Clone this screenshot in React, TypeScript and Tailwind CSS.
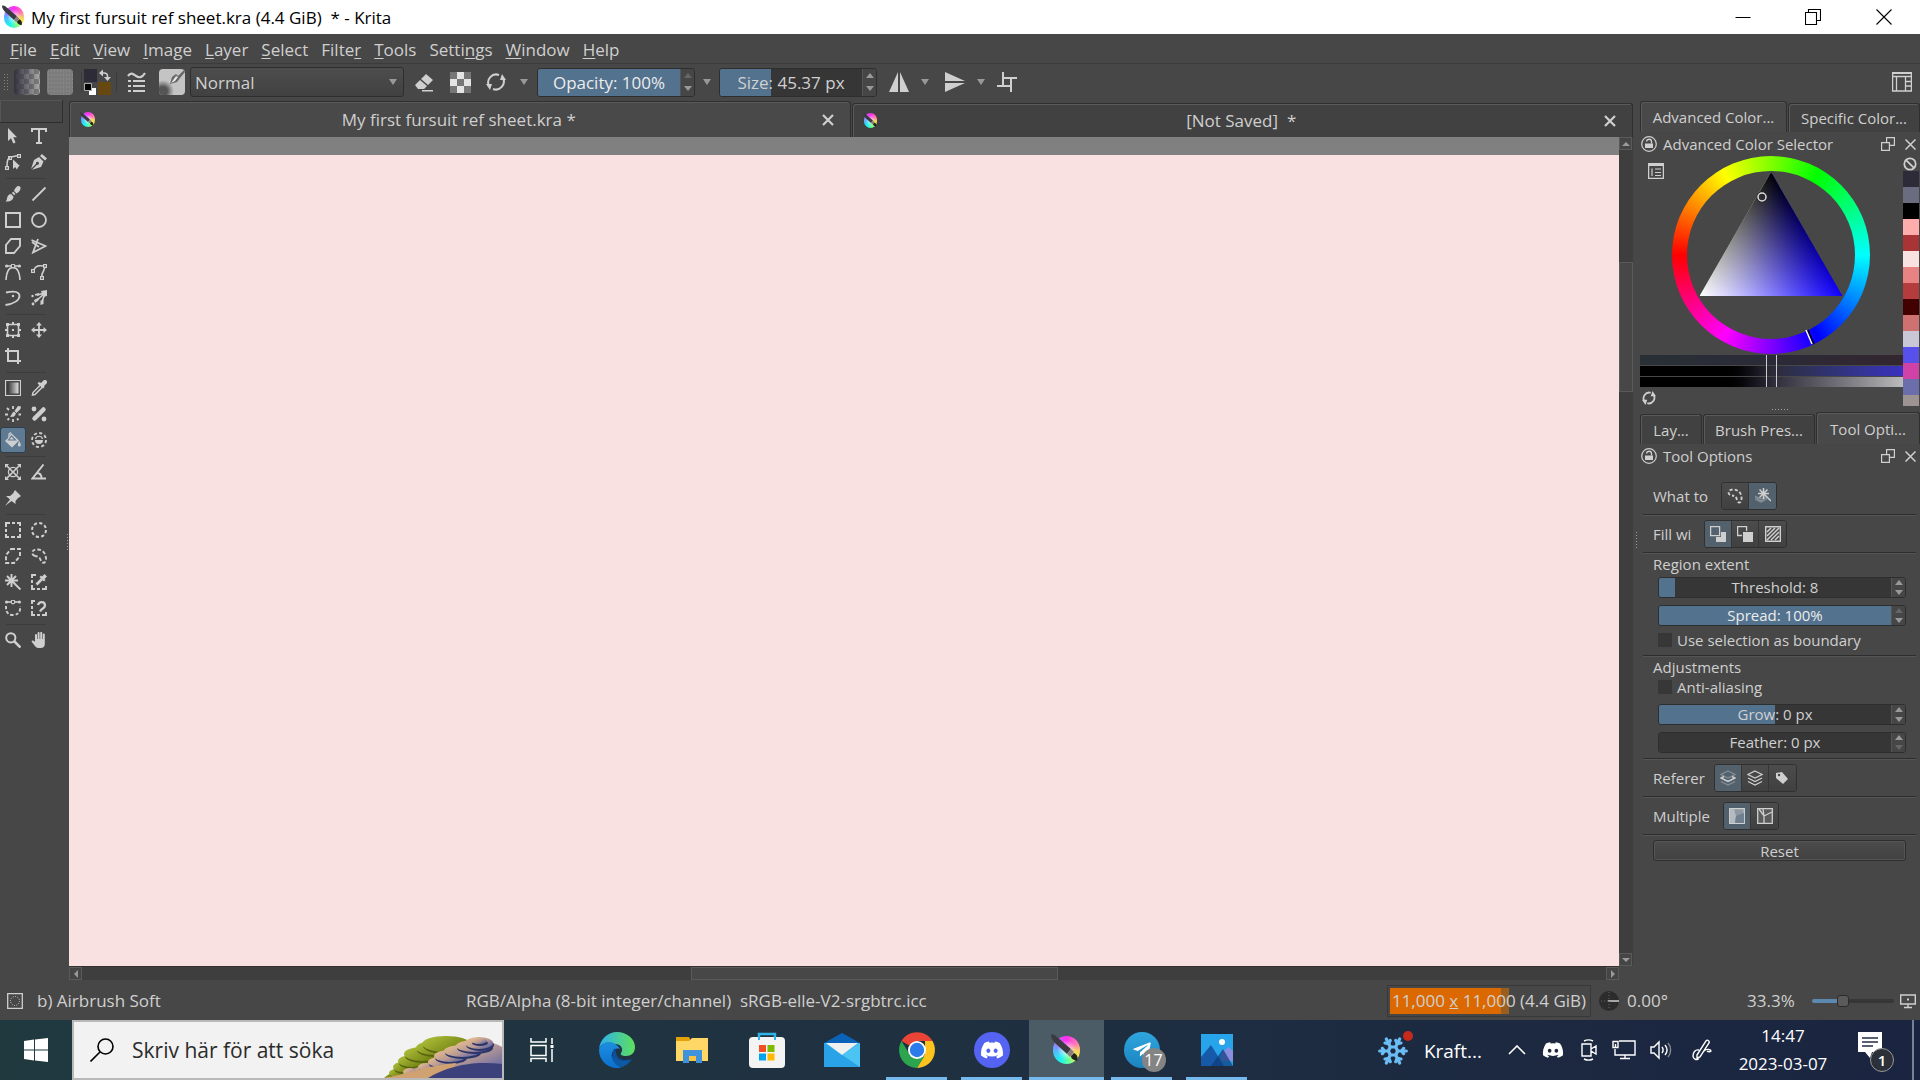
import type { ReactNode } from "react";
import { Snowflake } from "lucide-react";
import { FaDiscord, FaTelegramPlane } from "react-icons/fa";
import { clsx } from "clsx";

type IconProps = { children: ReactNode; className?: string; box?: string };

function Icon({ children, className = "size-4", box = "0 0 16 16" }: IconProps) {
  return (
    <svg viewBox={box} className={clsx("shrink-0", className)} fill="none" stroke="currentColor" strokeWidth="1.6">
      {children}
    </svg>
  );
}

const solid = { fill: "currentColor", stroke: "none" };

const toolGroups: { name: string; icon: ReactNode }[][] = [
  [
    { name: "Select shapes", icon: <path {...solid} d="M3 0v13l3-2.800 2.300 5.300 2.300-1-2.300-5.200H12z" /> },
    { name: "Text", icon: <path d="M1 4V1h14v3M8 1v14M5 15h6" strokeWidth="2" /> },
    { name: "Edit shapes", icon: <><path d="M2 12C2 7 3 4 5 3.500M6 3l6-1.300" /><path strokeWidth="1.200" d="M.6 12.600h2.800v2.800H.6zM3.600 2.600h2.800v2.800H3.600zM12.600.6h2.800v2.800h-2.800z" /><path {...solid} d="M8 5.500V15l2.200-2 1.600 2.500L14 12h1z" /></> },
    { name: "Calligraphy", icon: <><path {...solid} d="M0 15l3-9 5-3 4.500 4.500L10 13l-9 2.800 5-5a1.500 1.500 0 10-1-1zM9 2l2-2 5 4.500-2 2z" /></> },
  ],
  [
    { name: "Freehand brush", icon: <path {...solid} d="M12 .5c2-1 4 0 3.500 2.500-.5 2-2.500 4-4 4.500L9 5c.5-1.500 1.500-3.500 3-4.500zM8.300 5.800l2.200 2.200-1.300 1.300-2.400-2.300zM6 8l2.500 2.500C8.500 14 5 16 .5 15.500 2.500 14 1.500 12 2.800 10 3.600 8.800 4.800 8 6 8z" /> },
    { name: "Line", icon: <path d="M1.500 14.500L14.500 1.500" strokeWidth="1.800" /> },
    { name: "Rectangle", icon: <path d="M1 1h14v14H1z" strokeWidth="2" /> },
    { name: "Ellipse", icon: <circle cx="8" cy="8" r="7" strokeWidth="1.800" /> },
    { name: "Polygon", icon: <path d="M6 1h9v7l-6 7H1V7z" strokeWidth="1.900" /> },
    { name: "Polyline", icon: <path d="M7 1L2 14.500 14.500 8 .5 2M1 4l7 5" strokeWidth="1.800" /> },
    { name: "Bezier curve", icon: <><path d="M1 16C1.500 7 4 3.500 8 3.500S14.500 7 15 16M1 2h14" /><circle cx="1.600" cy="2" r="1.600" {...solid} /><circle cx="14.400" cy="2" r="1.600" {...solid} /><circle cx="8" cy="2" r="1.800" fill="#474747" strokeWidth="1.200" /></> },
    { name: "Freehand path", icon: <><path d="M3 5.500C5 1 9 1.500 13 2M11 13V10C13 7 13 5 14 3" /><path strokeWidth="1.200" d="M.6 5.600h2.800v2.800H.6zM12.600.6h2.800v2.800h-2.800zM9.600 12.600h2.800v2.800H9.600z" /></> },
    { name: "Dynamic brush", icon: <><path d="M1 2.500c9-2 13.500-.5 13.500 3.500S9 14 .5 15" strokeWidth="1.800" /><circle cx="8" cy="6" r="1.200" {...solid} /></> },
    { name: "Multibrush", icon: <><path d="M14 3L6 5M14 3L5 11M14 3l-3 9" strokeWidth="1.600" /><path {...solid} d="M10 1l6-1v6l-4 1zM4 4l4-1v2.500H4zM3 10l4-2 1 2-4 3zM9.500 10.500l3-.5v4l-3 1z" /><circle cx="1.500" cy="6" r="1.200" {...solid} /><circle cx="2" cy="14" r="1.400" {...solid} /></> },
  ],
  [
    { name: "Transform", icon: <><path d="M2.500 2.500h11v11h-11z" /><path {...solid} d="M1 1h3v3H1zM12 1h3v3h-3zM1 12h3v3H1zM12 12h3v3h-3zM7 0h2v2H7zM7 14h2v2H7zM0 7h2v2H0zM14 7h2v2h-2zM7 7h2v2H7z" /></> },
    { name: "Move", icon: <><path d="M8 2v12M2 8h12" strokeWidth="1.800" /><path {...solid} d="M8 0l3 3.500H5zM8 16l-3-3.500h6zM0 8l3.500-3v6zM16 8l-3.500 3V5z" /></> },
    { name: "Crop", icon: <path d="M0 3h13v13M3 0v13h13" strokeWidth="2" /> },
  ],
  [
    { name: "Gradient", icon: <><defs><linearGradient id="tg"><stop stopColor="#333" /><stop offset="1" stopColor="#ddd" /></linearGradient></defs><path d="M.5.500h15v15H.5z" strokeWidth="1.200" fill="none" /><path fill="url(#tg)" stroke="none" d="M2.500 2.500h11v11h-11z" /></> },
    { name: "Color sampler", icon: <><path d="M9.500 5L2 12.500 1.500 15l2.500-.5L11.500 7" strokeWidth="1.500" /><path {...solid} d="M10 3l3-3c2-.5 3.500 1 3 3l-3 3 .5 1-1.500 1.500L6.500 3.500 8 2z" /></> },
    { name: "Colorize mask", icon: <><path {...solid} d="M13 0l3 .5-.5 2.500-4 4-2-2zM9 5.500l2 2-1 2c-2 2-3.500 1.500-5 1C7 9 6.500 7 9 5.500z" /><path d="M8 0v3M2 2l2 2M0 8.500h3M2.500 14l1.700-1.700M8 13v3M13.500 14L12 12.500M13.500 8.500H16" strokeWidth="1.800" /></> },
    { name: "Smart patch", icon: <><path d="M3.500 12.500l9-9" strokeWidth="4.500" strokeLinecap="round" /><circle cx="3" cy="3" r="2.400" {...solid} /><circle cx="13" cy="13" r="2.400" {...solid} /></> },
    { name: "Fill", icon: <><path {...solid} d="M6 1l8 7.500-7 7L0 9l4.500-4.500zM14 9c1 1.500 1.800 2.500 1.800 4a1.500 1.500 0 01-3 0z" /><path d="M4 6V2l2-1.500" strokeWidth="1.300" /><path stroke="#5f7a93" strokeWidth="1.200" d="M3.500 8L6.500 4l4 4z" /></> },
    { name: "Enclose and fill", icon: <><circle cx="8" cy="8" r="7" strokeWidth="1.900" strokeDasharray="3.100 2.400" /><path {...solid} d="M4 8h8a4 4 0 01-8 0z" /><path d="M4.500 7a3.600 3.600 0 017 0" strokeWidth="1.200" /></> },
  ],
  [
    { name: "Assistants", icon: <><path d="M1 1l14 14M15 1L1 15" strokeWidth="1.600" /><circle cx="8" cy="8" r="4.600" strokeWidth="1.200" /><path {...solid} d="M0 0h4L0 4zM16 0v4l-4-4zM0 16v-4l4 4zM16 16h-4l4-4z" /></> },
    { name: "Measure", icon: <path d="M12.500.5L1.500 14.500H15M6 9c3 0 4.500 2 4.500 5.500" strokeWidth="1.900" /> },
    { name: "Reference images", icon: <path {...solid} d="M10 0l6 6-2 1.500-1 .5-2.500 3v3L6.500 11 0 16l5-6.500-4-3.500h4l3-2.500z" /> },
  ],
  [
    { name: "Rectangular selection", icon: <path d="M1 5V1h4M7 1h3M12 1h3v3M15 6v4M15 12v3h-3M10 15H6M4 15H1v-3M1 10V7" strokeWidth="2" /> },
    { name: "Elliptical selection", icon: <circle cx="8" cy="8" r="7" strokeWidth="2" strokeDasharray="3.200 2.300" /> },
    { name: "Polygonal selection", icon: <path d="M6 1h9v7l-6 7H1V7z" strokeWidth="1.900" strokeDasharray="4 2" /> },
    { name: "Freehand selection", icon: <path d="M4 8C-1 6 1 1 7 1.500S15 7 15 11s-4 5-5 2-2-4.500-6-5" strokeWidth="1.900" strokeDasharray="3.600 2" /> },
    { name: "Contiguous selection", icon: <path d="M6.500 0v13M0 6.500h13M2 2l9 9M11 2l-9 9M9 9l6.500 6.500" strokeWidth="1.900" /> },
    { name: "Similar color selection", icon: <><path d="M5 1H1v3M1 6v3M1 11v4h3M6 15h3M11 15h4v-3" strokeWidth="1.900" /><path d="M11 5l-5.500 5.500" strokeWidth="2.600" /><path {...solid} d="M11 2.500L13.500 0 16 2.500 13.500 5l1 1L13 7.500 8.500 3 10 1.500z" /></> },
    { name: "Bezier selection", icon: <><path d="M1 2h14" /><path d="M1 6v4c1 3 3 5 7 5s6-2 7-5V6" strokeWidth="1.900" strokeDasharray="3.200 2" /><circle cx="1.600" cy="2" r="1.600" {...solid} /><circle cx="14.400" cy="2" r="1.600" {...solid} /><circle cx="8" cy="2" r="1.800" fill="#474747" strokeWidth="1.200" /></> },
    { name: "Magnetic selection", icon: <><path d="M4 1H1v3M1 6v3M1 11v4h3M6 15h3M11 15h4v-3" strokeWidth="1.900" /><path d="M7 5c1-4 7-4 7 .5 0 3-3 2-5 6" strokeWidth="2.300" /></> },
  ],
  [
    { name: "Zoom", icon: <><circle cx="5.800" cy="5.800" r="4.600" strokeWidth="2" /><path d="M9 9l6.500 6.500" strokeWidth="2.600" /></> },
    { name: "Pan", icon: <path {...solid} d="M4 9V3a1 1 0 012 0v4h.6V1a1 1 0 012 0v6h.6V.9a1 1 0 012 0V7h.6V2.500a1 1 0 012 0V12c0 2.500-1.500 4-4 4H7.500C5 16 4 14 .5 9.500 1 8 2.500 8 4 10z" /> },
  ],
];

const menus = [
  ["", "F", "ile"], ["", "E", "dit"], ["", "V", "iew"], ["", "I", "mage"], ["", "L", "ayer"], ["", "S", "elect"],
  ["Filte", "r", ""], ["", "T", "ools"], ["Setti", "n", "gs"], ["", "W", "indow"], ["", "H", "elp"],
];

const history = [
  "#2d2b38", "#6a6d80", "#000000", "#ffacac", "#a93436", "#fae1e1", "#e88383", "#b43c3c",
  "#430000", "#d07171", "#c9c7d5", "#5750eb", "#d042a5", "#6c6dab", "#9c9392",
];

function KritaLogo({ className }: { className: string }) {
  return (
    <span className={clsx("relative block shrink-0", className)}>
      <span className="absolute inset-x-[8%] inset-y-[5%] rounded-full bg-[radial-gradient(#fff9_15%,transparent_50%),conic-gradient(#ff2bf0,#ff7fb0_60deg,#f8c86c_90deg,#f5f53a_125deg,#7dff8a_160deg,#19f5f0_210deg,#5cb0ff_270deg,#b46bff_310deg,#ff2bf0)]" />
      <svg viewBox="0 0 32 32" className="absolute inset-0 size-full">
        <path fill="#3b3b3f" d="M0 1c2-1 4 0 6 2l14 12-4 5L4 9C2 7 0 4 0 1z" />
        <path fill="#8a7d80" d="M16 20l4-5 3 3-4 5z" />
        <path fill="#222" d="M20 22l3-3c4 2 4 5 3 8-3-1-6-2-6-5z" />
      </svg>
    </span>
  );
}

function Caret() {
  return <span className="block border-x-4 border-t-6 border-x-transparent border-t-[#999]" />;
}

type SpinProps = { label: string; value: string; fill: number; className: string; small?: boolean; up?: boolean; down?: boolean };

function SliderSpin({ label, value, fill, className, small, up = true, down = true }: SpinProps) {
  return (
    <div className={clsx("flex overflow-hidden rounded-[3px] border border-[#2e2e2e]", className)}>
      <input
        aria-label={label}
        defaultValue={value}
        className={clsx("min-w-0 flex-1 text-center outline-none", small ? "text-[15px] leading-[19px]" : "pt-px text-[17px]", fill > 60 ? "text-[#ececec]" : "text-[#d0d0d0]")}
        style={{ background: `linear-gradient(to right, #53728e ${fill}%, #363636 ${fill}%)` }}
      />
      <div className="flex w-3.5 flex-col items-center justify-around border-l border-[#555] bg-[#464646]">
        <button aria-label={`Increase ${label}`} className={clsx("border-x-4 border-b-5 border-x-transparent", up ? "border-b-[#999]" : "border-b-[#666]")} />
        <button aria-label={`Decrease ${label}`} className={clsx("border-x-4 border-t-5 border-x-transparent", down ? "border-t-[#999]" : "border-t-[#666]")} />
      </div>
    </div>
  );
}

function TitleBar() {
  return (
    <header className="flex h-[34px] shrink-0 items-center bg-white pl-0.5 text-[17px] text-black">
      <KritaLogo className="size-6" />
      <h1 className="flex-1 whitespace-pre pt-0.5 pl-[5px]">My first fursuit ref sheet.kra (4.4 GiB)  * - Krita</h1>
      <div className="flex">
        <button aria-label="Minimize" className="grid w-[70px] place-items-center"><Icon><path strokeWidth="1" d="M.5 8.500h15" /></Icon></button>
        <button aria-label="Restore" className="grid w-[70px] place-items-center"><Icon><path strokeWidth="1.100" d="M.5 3.500h11v12H.5zM3.500 3V.5h12v11H12" /></Icon></button>
        <button aria-label="Close" className="grid w-[72px] place-items-center"><Icon><path strokeWidth="1.100" d="M.5.500l15 15M15.500.5l-15 15" /></Icon></button>
      </div>
    </header>
  );
}

function MenuBar() {
  return (
    <nav className="flex h-[30px] shrink-0 items-center gap-[13px] border-b border-[#3b3b3b] pt-0.5 pl-2.5 text-[17px]">
      {menus.map(([a, b, c]) => (
        <button key={a + b + c}>{a}<span className="underline underline-offset-2">{b}</span>{c}</button>
      ))}
    </nav>
  );
}

function Grip({ vertical }: { vertical?: boolean }) {
  return (
    <span
      className={clsx(
        "shrink-0 bg-[radial-gradient(#a0a0a0_1px,transparent_1px)] bg-[size:3px_3px]",
        vertical ? "h-[18px] w-[3px]" : "h-[3px] w-[18px]"
      )}
    />
  );
}

function Toolbar() {
  return (
    <div className="flex h-9 shrink-0 items-center">
      <span className="ml-[3px] h-[18px] w-1.5 bg-[radial-gradient(#858585_1px,transparent_1px)] bg-[size:3px_3px]" />
      <button aria-label="Gradients" className="ml-[5px] size-[26px] rounded-sm bg-[linear-gradient(to_right,#34323f,#34323f00),conic-gradient(#aaa_25%,#808080_0_50%,#aaa_0_75%,#808080_0)] bg-[size:100%_100%,10px_10px]" />
      <button aria-label="Patterns" className="ml-[7px] size-[26px] rounded-sm bg-[radial-gradient(#888_1px,#7c7c7c_1px)] bg-[size:3px_4px]" />
      <span className="ml-2 h-5 w-px bg-[#3b3b3b]" />
      <button aria-label="Foreground and background color" className="ml-[2px]">
        <Icon className="h-[26px] w-7" box="0 0 28 26">
          <path fill="#2d2b38" stroke="none" d="M0 0h13v13H0z" />
          <path fill="#674810" stroke="none" d="M14 13h13v13H14z" />
          <path fill="#fff" stroke="none" d="M5 19h7v7H5z" />
          <path fill="#000" stroke="#aaa" strokeWidth="1" d="M.5 14.500h7v7h-7z" />
          <path d="M18 4h2c2.500 0 3.500 1 3.500 3v2" strokeWidth="1.600" /><path {...solid} d="M15 4l4-3.500v7zM20 8h7l-3.500 4z" />
        </Icon>
      </button>
      <span className="ml-1 h-5 w-px bg-[#3b3b3b]" />
      <button aria-label="Edit brush settings" className="ml-2.5"><Icon className="h-5 w-[19px]" box="0 0 19 20"><path strokeWidth="2.200" d="M1 4c3-4 5-2 8 0s6 2 9-3" /><path strokeWidth="2" d="M1 9h3M6 9h12M1 14h3M6 14h12M1 19h3M6 19h12" /></Icon></button>
      <button aria-label="Brush preset" className="ml-[13px] overflow-hidden rounded-sm">
        <svg viewBox="0 0 26 26" className="size-[26px]">
          <defs><radialGradient id="soft"><stop offset=".4" stopColor="#555" /><stop offset="1" stopColor="#666" stopOpacity="0" /></radialGradient></defs>
          <path fill="#c4c4c4" d="M0 0h26v26H0z" />
          <circle cx="4" cy="22" r="11" fill="url(#soft)" />
          <path fill="#666" d="M11 15l2-7 4-3 2 2 7-7v3l-5 6-3 4z" /><path fill="#e8e8e8" d="M12 14l5-7 2 1-3 4z" />
        </svg>
      </button>
      <div className="relative ml-[5px] h-[30px] w-[214px]">
        <select aria-label="Blending mode" className="size-full appearance-none rounded-[3px] border border-[#2e2e2e] bg-linear-to-b from-[#4d4d4d] to-[#414141] pt-px pl-1 text-[17px] leading-7">
          <option>Normal</option>
        </select>
        <span className="pointer-events-none absolute top-3 right-[7px] flex"><Caret /></span>
      </div>
      <button aria-label="Eraser mode" className="ml-2.5"><Icon className="size-5" box="0 0 20 20"><path {...solid} d="M12 2l7 6-5 5-7-6zM6 8l7 6-3 3H4l-3-4zM8 18h11v1.500H8z" /></Icon></button>
      <button aria-label="Preserve alpha" className="ml-4">
        <Icon className="size-[21px]" box="0 0 21 21"><path fill="#777" stroke="none" d="M0 0h21v21H0z" /><path fill="#e4e4e4" stroke="none" d="M7 0h7v7H7zM0 7h7v7H0zM14 7h7v7h-7zM7 14h7v7H7z" /></Icon>
      </button>
      <button aria-label="Reload preset" className="ml-[15px]"><Icon className="size-5" box="0 0 20 20"><path strokeWidth="2" d="M3 14A8 8 0 0113 3M17 6A8 8 0 017 17" /><path {...solid} d="M0 12h6l-2 6zM20 8h-6l2-6z" /></Icon></button>
      <button aria-label="Opacity options" className="ml-3.5"><Caret /></button>
      <SliderSpin label="Opacity" value="Opacity: 100%" fill={100} up={false} className="ml-[9px] h-[29px] w-[158px]" />
      <button aria-label="Size options" className="ml-2"><Caret /></button>
      <SliderSpin label="Size" value="Size: 45.37 px" fill={36} className="ml-2 h-[29px] w-[158px]" />
      <button aria-label="Mirror horizontally" className="ml-3"><Icon className="size-5" box="0 0 20 20"><path {...solid} d="M9 0v20H0zM11 0v20h9z" /></Icon></button>
      <button aria-label="Horizontal mirror options" className="ml-3"><Caret /></button>
      <button aria-label="Mirror vertically" className="ml-4"><Icon className="size-5" box="0 0 20 20"><path {...solid} d="M0 0l20 9H0zM0 20l20-9H0z" /></Icon></button>
      <button aria-label="Vertical mirror options" className="ml-3"><Caret /></button>
      <button aria-label="Wrap around mode" className="ml-3"><Icon className="size-5" box="0 0 20 20"><path strokeWidth="2" d="M0 14h14V20M6 0v14M6 6h14M14 6v8" /></Icon></button>
      <button aria-label="Choose workspace" className="mr-2 ml-auto"><Icon className="size-5" box="0 0 20 20"><path strokeWidth="1.300" d="M.6 1h18.800v18H.6zM.6 4.500h18.800M4.500 4.500V19M13.500 4.500V19M13.500 9.500h6M13.500 14h6" /><path d="M0 1h20" strokeWidth="2" /></Icon></button>
    </div>
  );
}

function Toolbox() {
  return (
    <aside className="relative w-[69px] shrink-0">
      <div className="h-[23px] w-[63px] border-r border-b border-[#2e2e2e] shadow-[inset_1px_1px_#555]" />
      {toolGroups.map((group, i) => (
        <div key={i} className="pb-1.5">
          <div className="grid w-[52px] grid-cols-2">
            {group.map(({ name, icon }) => (
              <button key={name} aria-label={name} className={clsx("grid h-[26px] place-items-center", name === "Fill" && "rounded-[3px] border border-[#2f3f4d] bg-[#5f7a93]")}>
                <Icon>{icon}</Icon>
              </button>
            ))}
          </div>
          {i < toolGroups.length - 1 && <hr className="-mb-px ml-1.5 w-10 translate-y-[3px] border-[#3c3c3c]" />}
        </div>
      ))}
      <span className="absolute top-[433px] right-0 flex"><Grip vertical /></span>
    </aside>
  );
}

const arrowBox = "grid size-[13px] shrink-0 place-items-center border border-[#5a5a5a] bg-[#454545]";

function DocTab({ title, active }: { title: string; active?: boolean }) {
  return (
    <div className={clsx("flex flex-1 items-center rounded-t-[3px] border border-b-0 border-[#2f2f2f] px-2.5 shadow-[inset_1px_1px_#5a5a5a]", active ? "bg-[#494949]" : "mt-0.5 bg-[#414141]")}>
      <KritaLogo className="size-4" />
      <button className="flex-1 whitespace-pre text-[17px]">{title}</button>
      <button aria-label={`Close ${title}`} className="mr-1.5"><Icon className="size-3" box="0 0 12 12"><path strokeWidth="2.200" d="M1 1l10 10M11 1L1 11" /></Icon></button>
    </div>
  );
}

function Documents() {
  return (
    <main className="flex min-w-0 flex-1 flex-col">
      <div className="flex h-[37px] shrink-0 gap-px pt-px">
        <DocTab title="My first fursuit ref sheet.kra *" active />
        <DocTab title="[Not Saved]  *" />
      </div>
      <div className="flex min-h-0 flex-1">
        <div className="flex-1 border-t-[18px] border-[#808080] bg-[#f8e1e0]" />
        <div className="flex w-3.5 flex-col bg-[#3e3e3e]">
          <button aria-label="Scroll up" className={arrowBox}><span className="border-x-4 border-b-4 border-x-transparent border-b-[#999]" /></button>
          <div className="flex-[14]" />
          <div className="flex-[16] border border-[#5a5a5a] bg-[#474747]" />
          <div className="flex-[70]" />
          <button aria-label="Scroll down" className={arrowBox}><span className="border-x-4 border-t-4 border-x-transparent border-t-[#999]" /></button>
        </div>
      </div>
      <div className="mr-3.5 flex h-3.5 shrink-0 border-t border-[#333] bg-[#3e3e3e]">
        <button aria-label="Scroll left" className={arrowBox}><span className="border-y-4 border-r-4 border-y-transparent border-r-[#999]" /></button>
        <div className="flex-[40]" />
        <div className="flex-[24] border border-[#5a5a5a] bg-[#474747]" />
        <div className="flex-[36]" />
        <button aria-label="Scroll right" className={arrowBox}><span className="border-y-4 border-l-4 border-y-transparent border-l-[#999]" /></button>
      </div>
    </main>
  );
}

function DockTab({ title, active, className }: { title: string; active?: boolean; className: string }) {
  return (
    <button className={clsx("rounded-t-[3px] border border-b-0 border-[#2f2f2f] shadow-[inset_1px_1px_#5a5a5a]", active ? "bg-[#494949]" : "mt-0.5 border-b bg-[#414141]", className)}>
      {title}
    </button>
  );
}

function DockTitle({ title }: { title: string }) {
  return (
    <div className="flex h-6 items-center pr-1 pl-px">
      <Icon><circle cx="8" cy="8" r="7.300" strokeWidth="1.200" /><path {...solid} d="M4 7.500h8v4.500H4z" /><path d="M5.500 5.500c.5-3 5-3 5 0v2" strokeWidth="1.300" /></Icon>
      <h2 className="flex-1 pl-1.5">{title}</h2>
      <button aria-label="Float docker"><Icon className="size-3.5" box="0 0 14 14"><path strokeWidth="1.200" d="M.6 5.600h7.800v7.800H.6zM5.600 5V.6h7.800v7.800H9" /></Icon></button>
      <button aria-label="Close docker" className="ml-2.5"><Icon className="size-[11px]" box="0 0 11 11"><path strokeWidth="1.500" d="M.5.500l10 10M10.500.5l-10 10" /></Icon></button>
    </div>
  );
}

function ColorSelector() {
  return (
    <div className="flex h-[250px] overflow-hidden">
      <div className="relative flex min-w-0 flex-1 flex-col">
        <button aria-label="Color selector settings" className="absolute top-[7px] left-2"><Icon><path strokeWidth="1.300" d="M.6 1h14.800v14.400H.6z" /><path d="M0 1.500h16" strokeWidth="3" /><path strokeWidth="1.200" d="M4 5.500V13M7 6h6M7 9.500h6M7 12.500h6" /></Icon></button>
        <div className="ml-8 grid size-[198px] place-items-center rounded-full bg-[conic-gradient(from_270deg,#f00,#ff0,#0f0,#0ff,#00f,#f0f,#f00)]">
          <div className="size-[168px] rounded-full bg-[#474747] pt-px">
            <div className="mx-auto h-[124px] w-[143px] bg-[linear-gradient(#000,transparent),conic-gradient(from_150deg_at_50%_0,#1000ff_0deg,#fff_60deg)] [clip-path:polygon(50%_0,100%_100%,0_100%)]" />
          </div>
        </div>
        <svg viewBox="0 0 198 198" className="absolute top-0 left-8 size-[198px]" fill="none">
          <circle cx="90" cy="41" r="5" stroke="#222" strokeWidth="1" />
          <circle cx="90" cy="41" r="4" stroke="#ddd" strokeWidth="1.500" />
          <path stroke="#fff" strokeWidth="1.500" d="M134 174l6 14" /><path stroke="#000" strokeWidth="1.500" d="M136 174l6 14" />
        </svg>
        <div className="relative mt-px flex flex-col gap-px">
          <div className="h-2.5 bg-linear-to-r from-[#283036] via-[#2b2a38] to-[#33262f]" />
          <div className="h-2.5 bg-linear-to-r from-black from-30% via-[#2d2b38] via-50% to-[#3a30c0]" />
          <div className="h-2.5 bg-linear-to-r from-black from-30% via-[#2d2b38] via-50% to-[#bbb]" />
          <span className="absolute inset-y-0 left-[48%] w-[11px] border-x border-[#ccc]" />
        </div>
        <button aria-label="Update color history" className="mt-1 ml-0.5 w-3.5"><Icon className="size-3.5"><path d="M3 12A6.500 6.500 0 0110 2M13 4A6.500 6.500 0 016 14" strokeWidth="2" /><path {...solid} d="M0 10h6l-2 6zM16 6h-6l2-6z" /></Icon></button>
      </div>
      <div className="flex w-[17px] flex-col pr-px">
        <button aria-label="Clear history" className="h-[15px] shrink-0"><Icon className="size-3.5"><circle cx="8" cy="8" r="6.500" strokeWidth="2" /><path d="M3.500 3.500l9 9" strokeWidth="2" /></Icon></button>
        {history.map(color => (
          <button key={color} aria-label={color} className="h-4 shrink-0" style={{ backgroundColor: color }} />
        ))}
      </div>
    </div>
  );
}

const wand = <path d="M6.500 0v11M1 5.500h11M2.500 1.500l8 8M10.500 1.500l-8 8M9 8l5 5" strokeWidth="1.500" />;
const squares = <path {...solid} d="M6 6h10v10H6z" />;
const sheet = (
  <>
    <path strokeWidth="1.300" d="M8 1l7 3.500L8 8 1 4.500z" />
    <path strokeWidth="1.300" d="M1 8l7 3.500L15 8M1 11.500L8 15l7-3.500" />
  </>
);

const whatIcons = [
  <path d="M3 7C0 5 2 1 7 1.500S15 6 14.500 11s-4 4-4.500 1-2-4-5-4.500" strokeWidth="1.900" strokeDasharray="3.200 2" />,
  <><g opacity=".4"><path strokeWidth="1.200" d="M0 8l6 3 6-3M0 11l6 3 6-3M0 9l6 4 6-4" /></g><g transform="translate(2 0)">{wand}</g></>,
];
const fillIcons = [
  <><path {...solid} d="M11 6h5v10H6v-5h5z" /><path strokeWidth="1.300" d="M.6.600h9v9h-9z" /></>,
  <>{squares}<path strokeWidth="1.300" d="M5 9.500H.6V.6h9V5" /></>,
  <><path strokeWidth="1.400" d="M.7.700h14.600v14.600H.7z" /><path strokeWidth="1.500" d="M2 6l4-4M2 10l8-8M2 14L14 2M6 14l8-8M10 14l4-4" /></>,
];
const refIcons = [
  <g><g opacity=".4">{sheet}</g><path strokeWidth="1.500" d="M4 6.500L1 8l7 3.500L15 8l-3-1.500" /></g>,
  sheet,
  <><path {...solid} d="M2 3l6-1 6 7-5 5-7-6z" /><circle cx="5" cy="5" r="1.200" fill="#474747" stroke="none" /></>,
];
const multiIcons = [
  <><path fill="#8e98a2" strokeWidth="1.300" d="M.7.700h14.600v14.600H.7z" /><path fill="#b4bac0" stroke="none" d="M1 1h4l2 7-1 7H1z" /><path fill="#6f7f8d" stroke="none" d="M7 8l8-3v10H6z" /></>,
  <><path fill="#5a5a5a" strokeWidth="1.300" d="M.7.700h14.600v14.600H.7z" /><path strokeWidth="1.300" d="M2 1l5 7 8-4M7 8v7M7 8l-1-7" /></>,
];

function OptionRow({ label, icons, active, gap }: { label: string; icons: ReactNode[]; active: number; gap: string }) {
  return (
    <div className={clsx("flex h-[38px] items-center border-b border-[#2d2d2d] pl-2.5 shadow-[0_1px_#555]", gap)}>
      <span className="whitespace-nowrap">{label}</span>
      <div className="flex h-7 overflow-hidden rounded-[3px] border border-[#303030]">
        {icons.map((icon, i) => (
          <button key={i} aria-label={`${label} ${i + 1}`} className={clsx("grid w-[27px] place-items-center border-r border-[#363636] last:border-r-0", i === active ? "bg-[#53616d]" : "bg-linear-to-b from-[#4c4c4c] to-[#404040]")}>
            <Icon>{icon}</Icon>
          </button>
        ))}
      </div>
    </div>
  );
}

function CheckOption({ label }: { label: string }) {
  return (
    <label className="flex h-5 items-center gap-[5px] pl-[15px]">
      <input type="checkbox" className="size-3.5 appearance-none bg-[#373737]" />
      {label}
    </label>
  );
}

function Dockers() {
  return (
    <aside className="flex w-[287px] shrink-0 text-[15px] leading-5">
      <div className="flex w-[7px] shrink-0 items-center justify-center"><Grip vertical /></div>
      <div className="min-w-0 flex-1">
        <div className="flex h-8 gap-px pt-px">
          <DockTab title="Advanced Color..." active className="w-[147px]" />
          <DockTab title="Specific Color..." className="flex-1" />
        </div>
        <DockTitle title="Advanced Color Selector" />
        <ColorSelector />
        <div className="flex h-1.5 items-center justify-center"><Grip /></div>
        <div className="flex h-8 gap-px">
          <DockTab title="Lay..." className="w-[62px]" />
          <DockTab title="Brush Pres..." className="w-[112px]" />
          <DockTab title="Tool Opti..." active className="flex-1" />
        </div>
        <DockTitle title="Tool Options" />
        <section className="mt-[9px] mr-1 ml-[3px]">
          <OptionRow label="What to" icons={whatIcons} active={1} gap="gap-[13px]" />
          <OptionRow label="Fill wi" icons={fillIcons} active={0} gap="gap-[13px]" />
          <div className="flex h-[103px] flex-col border-b border-[#2d2d2d] pt-px shadow-[0_1px_#555]">
            <h3 className="ml-2.5">Region extent</h3>
            <SliderSpin small label="Threshold" value="Threshold: 8" fill={7} className="mt-[3px] mr-2.5 ml-[15px] h-[21px]" />
            <SliderSpin small label="Spread" value="Spread: 100%" fill={100} up={false} className="mt-[7px] mr-2.5 mb-1 ml-[15px] h-[21px]" />
            <CheckOption label="Use selection as boundary" />
          </div>
          <div className="flex h-[103px] flex-col border-b border-[#2d2d2d] pt-px shadow-[0_1px_#555]">
            <h3 className="ml-2.5">Adjustments</h3>
            <CheckOption label="Anti-aliasing" />
            <SliderSpin small label="Grow" value="Grow: 0 px" fill={50} className="mt-[7px] mr-2.5 ml-[15px] h-[21px]" />
            <SliderSpin small label="Feather" value="Feather: 0 px" fill={0} down={false} className="mt-[7px] mr-2.5 ml-[15px] h-[21px]" />
          </div>
          <OptionRow label="Referer" icons={refIcons} active={0} gap="gap-[9px]" />
          <OptionRow label="Multiple" icons={multiIcons} active={0} gap="gap-[13px]" />
          <div className="pt-[5px] pr-2.5 pl-2.5">
            <button className="h-[21px] w-full rounded-[3px] border border-[#2e2e2e] bg-linear-to-b from-[#4d4d4d] to-[#404040] leading-4 shadow-[inset_0_0_0_1px_#555]">Reset</button>
          </div>
        </section>
      </div>
    </aside>
  );
}

function StatusBar() {
  return (
    <footer className="flex h-10 shrink-0 items-center pt-0.5 text-[17px] whitespace-pre">
      <button aria-label="Selection display" className="ml-[7px]"><Icon><path strokeWidth="1.300" d="M.7.700h14.600v14.600H.7z" /><circle cx="8" cy="8" r="4.500" strokeWidth="1" strokeDasharray="1 1.300" /></Icon></button>
      <span className="w-[429px] pl-3.5">b) Airbrush Soft</span>
      <span className="flex-1 pl-3.5">RGB/Alpha (8-bit integer/channel)  sRGB-elle-V2-srgbtrc.icc</span>
      <button className="flex h-8 w-[204px] items-center justify-center border border-[#383838] bg-[linear-gradient(to_right,#dc6900_56%,#9a5f20_56%_60%,transparent_60%)] bg-clip-content p-0.5">
        11,000 <u>x</u> 11,000 (4.4 GiB)
      </button>
      <Icon className="ml-2 size-5" box="0 0 20 20"><circle cx="10" cy="10" r="10" fill="#2c2c2c" stroke="none" /><path strokeWidth="1.500" d="M9 10h11" /><path stroke="#666" strokeWidth="1" strokeDasharray="1 2" d="M10 1v18M2 10h7" /></Icon>
      <span className="w-32 pl-2">0.00°</span>
      <span className="w-[65px]">33.3%</span>
      <input
        type="range"
        aria-label="Zoom"
        defaultValue={36}
        className="h-1 w-[82px] appearance-none rounded bg-linear-to-r from-[#5d88b0] from-35% to-[#363636] to-35% [&::-webkit-slider-thumb]:h-3 [&::-webkit-slider-thumb]:w-3 [&::-webkit-slider-thumb]:appearance-none [&::-webkit-slider-thumb]:rounded-[3px] [&::-webkit-slider-thumb]:border [&::-webkit-slider-thumb]:border-[#2b2b2b] [&::-webkit-slider-thumb]:bg-[#5a5a5a]"
      />
      <button aria-label="Canvas size mode" className="mr-1 ml-1.5"><Icon><path strokeWidth="1.400" d="M.7 2h14.600v9H.7zM8 11v3.500M4 14.500h8" /><path {...solid} d="M7 5.500h2v2H7z" /></Icon></button>
    </footer>
  );
}

// cx, cy, rx, ry of each terrace, from the lowest up
const greenSteps = [[14, 37, 7, 4], [20, 31, 9, 5], [30, 25, 14, 6], [40, 18, 18, 7], [52, 12, 18, 7], [64, 8, 24, 8]];
const rockSteps = [[28, 36, 7, 4], [44, 31, 8, 4], [58, 26, 12, 5], [68, 20, 16, 6], [80, 15, 18, 6], [92, 10, 18, 6], [97, 7, 14, 6], [97, 5, 8, 3]];

function Hills() {
  return (
    <svg viewBox="0 0 120 42" className="absolute right-0 bottom-0 h-[42px] w-[120px]">
      <defs>
        <linearGradient id="grn" x1="0" x2="1" y1="0" y2=".6"><stop stopColor="#b3c33c" /><stop offset="1" stopColor="#6f8012" /></linearGradient>
        <linearGradient id="rock" x1="0" x2="1" y1="0" y2=".8"><stop stopColor="#f0c48c" /><stop offset=".6" stopColor="#b99a94" /><stop offset="1" stopColor="#5a62a6" /></linearGradient>
      </defs>
      <path fill="#7f9018" d="M2 42c10-8 40-28 84-34v34z" />
      {greenSteps.map(([x, y, rx, ry]) => (
        <g key={x}>
          <ellipse cx={x + 1} cy={y + 2} rx={rx} ry={ry} fill="#55650c" />
          <ellipse cx={x} cy={y} rx={rx} ry={ry} fill="url(#grn)" />
        </g>
      ))}
      <path fill="url(#rock)" d="M20 42c2-6 8-8 14-10l50-18c10-10 24-10 36-3v31z" />
      {rockSteps.map(([x, y, rx, ry]) => (
        <g key={x + y}>
          <ellipse cx={x + 1} cy={y + 2} rx={rx} ry={ry} fill="#2b3568" />
          <ellipse cx={x} cy={y} rx={rx} ry={ry} fill="url(#rock)" />
        </g>
      ))}
      <path fill="#d0a272" d="M2 42c24-4 44-13 72-15l-8 15z" />
      <path fill="#3c417c" d="M46 42c14-8 36-18 74-14v14z" />
    </svg>
  );
}

const apps: { name: string; open?: boolean; active?: boolean; icon: ReactNode }[] = [
  { name: "Edge", icon: (
    <svg viewBox="0 0 36 36" className="size-9">
      <defs>
        <linearGradient id="e1" x1="0" x2="1"><stop stopColor="#2cb0f0" /><stop offset="1" stopColor="#5fe05a" /></linearGradient>
        <linearGradient id="e2" x1="0" x2="0" y1="0" y2="1"><stop stopColor="#1d8fe0" /><stop offset="1" stopColor="#0b6fd0" /></linearGradient>
      </defs>
      <path fill="url(#e1)" d="M0 17C1 7 9 0 18 0c10 0 18 7 18 15 0 6-4 9-9 9-4 0-6-1-5-3 3-4 0-9-6-9C9 9 2 11 0 17z" />
      <path fill="url(#e2)" d="M0 18C1 12 8 8 14 11c3 1 6 4 7 6-6-2-10 4-7 10 2 5 6 8 9 8-2 1-4 1-5 1C8 36 0 28 0 18z" />
      <path fill="#0d4f9e" d="M16 16c-4 4-3 11 2 15 4 2 9 1 13-4-5 2-11 1-13-3-1-2-1-5-2-8z" />
      <path fill="#0c59a4" d="M12 21c0 8 6 14 12 14 4-2 7-5 9-8-8 4-19 2-21-6z" />
    </svg>) },
  { name: "File Explorer", icon: (
    <svg viewBox="0 0 32 28" className="h-7 w-8"><path fill="#e3a008" d="M0 1h13l2 4H0z" /><path fill="#ffd766" d="M0 5h13l3-3h16v23H0z" /><path fill="#3f92dc" d="M7 14h19v13h-6v-7h-7v7H7z" /><path fill="#f6c342" d="M13 20h7v5h-7z" /></svg>) },
  { name: "Microsoft Store", icon: (
    <svg viewBox="0 0 36 36" className="size-9"><path fill="none" stroke="#2fb4ea" strokeWidth="2.500" d="M10 8V2h16v6" /><rect y="5" width="36" height="31" rx="4" fill="#f4f4f4" /><path fill="none" stroke="#2fb4ea" strokeWidth="2" d="M10 8V5M26 8V5" /><path fill="#f25022" d="M10 13h7v7h-7z" /><path fill="#7fba00" d="M18.500 13h7v7h-7z" /><path fill="#00a4ef" d="M10 21.500h7v7h-7z" /><path fill="#ffb900" d="M18.500 21.500h7v7h-7z" /></svg>) },
  { name: "Mail", icon: (
    <svg viewBox="0 0 36 34" className="h-[34px] w-9"><path fill="#0a63b8" d="M0 10L18 0l18 10v4H0z" /><path fill="#30b4ee" d="M0 10h36v24H0z" /><path fill="#1d8fe0" d="M0 34l18-13 18 13z" /><path fill="#2aa2e8" d="M0 10l18 12L36 34H0z" /><path fill="#4cc4f3" d="M36 10L18 22l18 12z" /><path fill="#f0f0f0" d="M2 10h32L18 22z" /></svg>) },
  { name: "Chrome", open: true, icon: (
    <svg viewBox="0 0 36 36" className="size-9"><path fill="#e94435" d="M2.500 9a18 18 0 0131 0H18v9z" /><path fill="#fcc31e" d="M33.500 9A18 18 0 0118 36l8-14V9z" /><path fill="#2da44e" d="M2.500 9A18 18 0 0018 36l7-11-14-2z" /><circle cx="18" cy="18" r="9" fill="#fff" /><circle cx="18" cy="18" r="7.200" fill="#2b7bea" /></svg>) },
  { name: "Discord", open: true, icon: <span className="grid size-9 place-items-center rounded-full bg-[#5563f2]"><FaDiscord className="size-6 text-white" /></span> },
  { name: "Krita", open: true, active: true, icon: <KritaLogo className="size-8" /> },
  { name: "Telegram", open: true, icon: (
    <span className="relative grid size-9 place-items-center rounded-full bg-linear-to-b from-[#2fa6de] to-[#1b84c0]">
      <FaTelegramPlane className="size-5 text-white" />
      <span className="absolute -right-1.5 -bottom-1 grid size-6 place-items-center rounded-full bg-[#848484] text-[16px] text-white">17</span>
    </span>) },
  { name: "Photos", open: true, icon: (
    <svg viewBox="0 0 32 32" className="size-8"><path fill="#28a5ea" d="M0 0h32v32H0z" /><path fill="#8b8de0" d="M20 20l7-7 5 4v10H20z" /><path fill="#1659a8" d="M0 23l10-12 13 21H0z" /><path fill="#0e3c7a" d="M10 32l12-17 10 17z" opacity=".7" /><circle cx="21" cy="8" r="3" fill="#fff" /></svg>) },
];

function Taskbar() {
  return (
    <footer className="flex h-[60px] shrink-0 items-stretch bg-linear-to-r from-[#20393f] via-[#1f3041] to-[#1a2440] text-white">
      <button aria-label="Start" className="grid w-[72px] place-items-center">
        <svg viewBox="0 0 24 24" className="size-6" fill="#fff"><path d="M0 3l10-1.400V11.500H0zM11 1.400L24 0v11.500H11zM0 12.500h10v10L0 21zM11 12.500h13V24l-13-1.500z" /></svg>
      </button>
      <label className="relative flex w-[432px] items-center overflow-hidden border-2 border-[#b9b9b9] bg-[#f2f2f2] pl-4 text-black">
        <Icon className="size-6" box="0 0 24 24"><circle cx="15.500" cy="8.500" r="7.500" /><path d="M10 14L.5 23.500" /></Icon>
        <input aria-label="Sök" placeholder="Skriv här för att söka" className="min-w-0 flex-1 pt-0.5 pl-[18px] text-[21px] outline-none placeholder:text-[#2b2b2b]" />
        <Hills />
      </label>
      <button aria-label="Task View" className="grid w-[75px] place-items-center"><Icon className="size-6 text-white" box="0 0 24 24"><path strokeWidth="1.500" d="M1 0v4h15V0M1 7.500h15v10H1zM1 24v-3.500h15V24M22 0v6M22 11v13" /><path {...solid} d="M20.500 7h3v3h-3z" /></Icon></button>
      {apps.map(app => (
        <button key={app.name} aria-label={app.name} className={clsx("relative grid w-[75px] place-items-center", app.active && "bg-[#4b5c67]")}>
          {app.icon}
          {app.open && <span className={clsx("absolute bottom-0 h-[3px] bg-[#76b9ed]", app.active ? "inset-x-0" : "inset-x-[7px]")} />}
        </button>
      ))}
      <div className="ml-auto flex items-center text-white">
        <button className="flex items-center gap-[15px] pt-0.5 text-[19px]">
          <span className="relative"><Snowflake className="size-8 text-[#6cbcf5]" strokeWidth={2.400} /><span className="absolute -top-1 -right-1 size-2.5 rounded-full bg-[#c42b1c]" /></span>
          Kraft...
        </button>
        <button aria-label="Show hidden icons" className="ml-[26px]"><Icon className="h-2.5 w-[18px]" box="0 0 18 10"><path d="M1 9l8-8 8 8" /></Icon></button>
        <button aria-label="Discord" className="ml-4"><FaDiscord className="size-[22px]" /></button>
        <button aria-label="Meet Now" className="ml-4"><Icon className="h-[22px] w-[18px]" box="0 0 18 22"><path strokeWidth="1.400" d="M2 5h9v12H2zM11 10l5-3v8l-5-3M4 2c3-1.500 6-1.500 9 0M4 20c3 1.500 6 1.500 9 0" /></Icon></button>
        <button aria-label="Network" className="ml-3.5"><Icon className="h-5 w-6" box="0 0 24 20"><path strokeWidth="1.400" d="M7 1h16v14H3V9M13 15v3M8 18.500h10M1 1.500h5v6H1zM3.500 4v4" /></Icon></button>
        <button aria-label="Volume" className="ml-3.5"><Icon className="h-5 w-[22px]" box="0 0 22 20"><path strokeWidth="1.400" d="M1 7h3l5-5v16l-5-5H1zM12 7c1.500 2 1.500 4 0 6M15 5c2.500 3 2.500 7 0 10" /><path stroke="#888" strokeWidth="1.400" d="M18 3c3.500 4 3.500 10 0 14" /></Icon></button>
        <button aria-label="Pen" className="ml-5"><Icon className="h-[22px] w-5" box="0 0 20 22"><path strokeWidth="1.400" d="M5 16L14 2c1-2 4 0 3 2L8 18l-3 1zM7 11c-4-1-6 3-6 6s4 5 6 2M12 12c3-3 7-1 7 0s-3 1-4 0" /></Icon></button>
        <button className="ml-[22px] w-[98px] text-center text-[17px] leading-[28px]">14:47<br />2023-03-07</button>
        <button aria-label="Notifications" className="relative ml-[26px] h-9 w-9">
          <svg viewBox="0 0 24 28" className="absolute top-0 left-0 h-7 w-6"><path fill="#fff" d="M0 0h24v20H14l-2 6-5-6H0z" /><path stroke="#222c44" strokeWidth="1.500" d="M4 6h16M4 10h16M4 14h11" /></svg>
          <span className="absolute right-0 -bottom-1 grid size-6 place-items-center rounded-full border border-[#999] bg-[#2c3038] text-[15px] font-semibold">1</span>
        </button>
        <span className="mr-1.5 ml-[18px] h-[60px] w-0.5 bg-[#788091]" />
      </div>
    </footer>
  );
}

export default function App() {
  return (
    <div className="flex h-screen flex-col overflow-hidden bg-[#474747] font-['Open_Sans','Noto_Sans',sans-serif] text-[#cfcfcf]">
      <TitleBar />
      <MenuBar />
      <Toolbar />
      <div className="flex min-h-0 flex-1">
        <Toolbox />
        <Documents />
        <Dockers />
      </div>
      <StatusBar />
      <Taskbar />
    </div>
  );
}
